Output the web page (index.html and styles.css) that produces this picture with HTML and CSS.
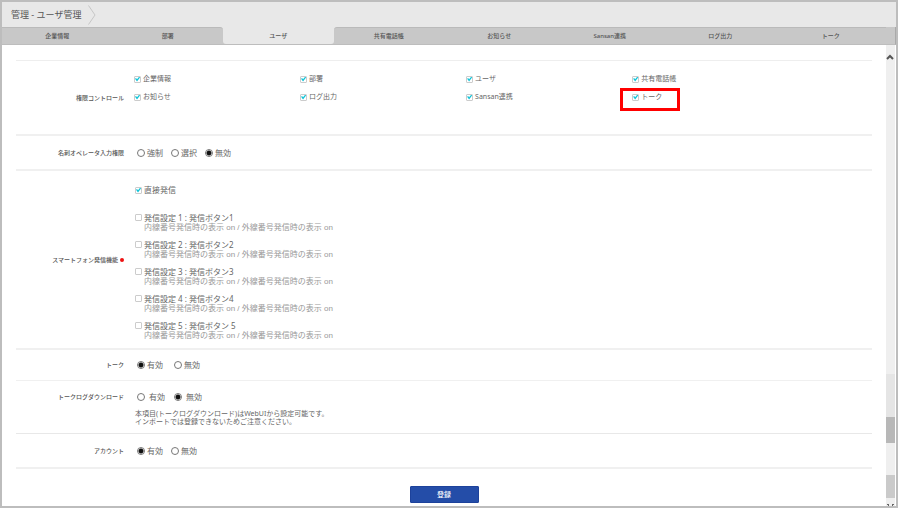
FILE: index.html
```html
<!DOCTYPE html>
<html lang="ja">
<head>
    <meta charset="UTF-8">
    <meta name="viewport" content="width=device-width, initial-scale=1.0">
    <title>管理 - ユーザ管理</title>
    <link rel="stylesheet" href="styles.css">
</head>
<body>
<div class="window">
    <header class="header">
        <h1>管理 - ユーザ管理</h1>
        <svg class="chevron" viewBox="0 0 8 20" fill="none" stroke="#c6c6c6"><path d="M.5 0.5L7 10L.5 19.5"/></svg>
    </header>

    <nav class="tabs">
        <a href="#">企業情報</a>
        <a href="#" class="before">部署</a>
        <a href="#" class="active"><span>ユーザ</span></a>
        <a href="#" class="after">共有電話帳</a>
        <a href="#">お知らせ</a>
        <a href="#">Sansan連携</a>
        <a href="#">ログ出力</a>
        <a href="#">トーク</a>
    </nav>

    <div class="content">
        <form class="form">
            <section class="row permissions">
                <h2>権限コントロール</h2>
                <div class="check-grid">
                    <label><input type="checkbox" checked>企業情報</label>
                    <label><input type="checkbox" checked>部署</label>
                    <label><input type="checkbox" checked>ユーザ</label>
                    <label><input type="checkbox" checked>共有電話帳</label>
                    <label><input type="checkbox" checked>お知らせ</label>
                    <label><input type="checkbox" checked>ログ出力</label>
                    <label><input type="checkbox" checked>Sansan連携</label>
                    <label class="marked"><input type="checkbox" checked>トーク</label>
                </div>
            </section>

            <section class="row">
                <h2>名刺オペレータ入力権限</h2>
                <div class="radios">
                    <label><input type="radio" name="operator">強制</label>
                    <label><input type="radio" name="operator">選択</label>
                    <label><input type="radio" name="operator" checked>無効</label>
                </div>
            </section>

            <section class="row calls">
                <h2>スマートフォン発信機能<span class="required"></span></h2>
                <div class="call-list">
                    <label class="direct"><input type="checkbox" checked>直接発信</label>
                    <div class="call">
                        <label><input type="checkbox">発信設定 1 : 発信ボタン1</label>
                        <p>内線番号発信時の表示 on / 外線番号発信時の表示 on</p>
                    </div>
                    <div class="call">
                        <label><input type="checkbox">発信設定 2 : 発信ボタン2</label>
                        <p>内線番号発信時の表示 on / 外線番号発信時の表示 on</p>
                    </div>
                    <div class="call">
                        <label><input type="checkbox">発信設定 3 : 発信ボタン3</label>
                        <p>内線番号発信時の表示 on / 外線番号発信時の表示 on</p>
                    </div>
                    <div class="call">
                        <label><input type="checkbox">発信設定 4 : 発信ボタン4</label>
                        <p>内線番号発信時の表示 on / 外線番号発信時の表示 on</p>
                    </div>
                    <div class="call">
                        <label><input type="checkbox">発信設定 5 : 発信ボタン 5</label>
                        <p>内線番号発信時の表示 on / 外線番号発信時の表示 on</p>
                    </div>
                </div>
            </section>

            <section class="row talk">
                <h2>トーク</h2>
                <div class="radios wide">
                    <label><input type="radio" name="talk" checked>有効</label>
                    <label><input type="radio" name="talk">無効</label>
                </div>
            </section>

            <section class="row talk-log">
                <h2>トークログダウンロード</h2>
                <div>
                    <div class="radios loose">
                        <label><input type="radio" name="talklog">有効</label>
                        <label><input type="radio" name="talklog" checked>無効</label>
                    </div>
                    <p class="note">本項目(トークログダウンロード)はWebUIから設定可能です。<br>インポートでは登録できないためご注意ください。</p>
                </div>
            </section>

            <section class="row">
                <h2>アカウント</h2>
                <div class="radios">
                    <label><input type="radio" name="account" checked>有効</label>
                    <label><input type="radio" name="account">無効</label>
                </div>
            </section>

            <button type="submit" class="submit">登録</button>
        </form>

        <div class="scrollbar">
            <div class="track-top">
                <svg viewBox="0 0 8 6" fill="none" stroke="#555" stroke-width="2"><path d="M1 5L4 2L7 5"/></svg>
            </div>
            <div class="shade"></div>
            <div class="thumb"></div>
            <div class="track-mid"></div>
            <div class="thumb-low"></div>
            <div class="track-end">
                <svg viewBox="0 0 8 2" fill="#666"><path d="M1 0h2v1H1zM2 1h1v1H2zM6 0h2v1H6zM6 1h1v1H6z"/></svg>
            </div>
        </div>
    </div>
</div>
</body>
</html>
```
FILE: styles.css
```css
* {
    box-sizing: border-box;
}
body {
    margin: 0;
    font-family: "Noto Sans", "Noto Sans CJK JP", sans-serif;
    font-size: 8px;
    line-height: 10px;
    color: #666;
    background: #fff;
}
h1, h2, p {
    margin: 0;
    font-weight: normal;
}
.window {
    display: flex;
    flex-direction: column;
    min-height: 100vh;
    border: 2px solid #bdbdbd;
}

/* Header and tabs */
.header {
    display: flex;
    align-items: center;
    gap: 7px;
    height: 25px;
    padding-left: 9px;
    background: #e8e8e8;
}
.header h1 {
    color: #555;
    font-size: 9px;
    line-height: 12px;
}
.chevron {
    width: 8px;
    height: 20px;
}
.tabs {
    display: flex;
    height: 18px;
    padding-right: 9px;
    background: linear-gradient(to right, #e8e8e8 50%, #c8c8c8 50%);
    border-bottom: 1px solid #bdbdbd;
    border-right: 1px solid #aaa;
}
.tabs a {
    flex: 1;
    background: #c8c8c8;
    border-top: 1px solid #bababa;
    color: #555;
    font-size: 6px;
    font-weight: 500;
    line-height: 16px;
    text-align: center;
    text-decoration: none;
}
.tabs .before {
    border-top-right-radius: 3px;
}
.tabs .after {
    border-top-left-radius: 3px;
}
.tabs .active {
    border-top: 0;
}
.tabs .active span {
    display: block;
    height: 100%;
    padding-top: 1px;
    background: #e8e8e8;
    border-radius: 0 0 3px 3px;
}

/* Form rows */
.content {
    display: flex;
    flex: 1;
}
.form {
    flex: 1;
    padding: 15px 14px 3px;
}
.row {
    display: grid;
    grid-template-columns: 108px 1fr;
    column-gap: 10px;
    align-items: center;
    min-height: 35px;
    border-bottom: 2px solid #f0f0f0;
}
.row h2 {
    color: #555;
    font-size: 6px;
    font-weight: 500;
    text-align: right;
}
.required {
    display: inline-block;
    width: 4px;
    height: 4px;
    margin-left: 2px;
    border-radius: 50%;
    background: #e11;
    vertical-align: middle;
}
label {
    display: flex;
    align-items: center;
    gap: 2px;
}
.permissions {
    border-top: 1px solid #eee;
}
.check-grid {
    display: grid;
    grid-template-columns: repeat(4, 1fr);
    row-gap: 8px;
    padding: 13px 10% 32px 0;
    font-size: 7px;
}
.marked {
    position: relative;
    justify-self: start;
}
.marked::after {
    content: "";
    position: absolute;
    inset: -4px -18px -9px -12px;
    border: 3px solid #f00;
}
.radios {
    display: flex;
    gap: 8px;
    padding-left: 3px;
}
.wide {
    gap: 11px;
}
.loose {
    gap: 9px;
}
.loose label {
    gap: 4px;
}
.call-list {
    padding: 14px 0 7px 1px;
}
.direct {
    margin-bottom: 17px;
}
.call + .call {
    margin-top: 6px;
}
.call label {
    line-height: 11px;
}
.call p {
    padding-left: 9px;
    color: #999;
    font-family: "Liberation Sans", "Noto Sans CJK JP", sans-serif;
}
.talk {
    min-height: 31px;
    border-bottom-width: 1px;
}
.talk-log {
    align-items: start;
    padding: 11px 0 7px;
    border-bottom-width: 1px;
    border-color: #e8e8e8;
}
.note {
    margin-top: 8px;
    padding-left: 1px;
    font-size: 7px;
    line-height: 8px;
}

/* Controls */
input {
    flex: none;
    appearance: none;
    margin: 0;
    background: #fff;
}
input[type="checkbox"] {
    width: 7px;
    height: 7px;
    border: 1px solid #ccc;
    border-radius: 1px;
}
input[type="checkbox"]:checked::before {
    content: "";
    display: block;
    width: 5px;
    height: 5px;
    background: #10c4d8;
    clip-path: polygon(0 45%, 20% 30%, 40% 55%, 85% 0, 100% 20%, 40% 100%);
}
input[type="radio"] {
    width: 8px;
    height: 8px;
    border: 1px solid #777;
    border-radius: 50%;
}
input[type="radio"]:checked {
    background: radial-gradient(circle, #111 2px, #fff 3px);
}
.submit {
    display: block;
    min-width: 69px;
    margin: 17px auto 0;
    padding: 3px 8px;
    border: 1px solid #1d429b;
    border-radius: 1px;
    background: #244da8;
    color: #fff;
    font: 500 7px/9px "Noto Sans CJK JP", sans-serif;
}

/* Scrollbar */
.scrollbar {
    display: flex;
    flex-direction: column;
    width: 9px;
    margin-right: 1px;
    background: #efefef;
}
.scrollbar svg {
    display: block;
    width: 8px;
}
.track-top {
    flex: 328;
    padding-top: 9px;
}
.shade {
    flex: 44;
    background: #e5e5e5;
}
.thumb {
    flex: 26;
    background: #b8b8b8;
}
.track-mid {
    flex: 33;
}
.thumb-low {
    flex: 24;
    background: #cacaca;
}
.track-end {
    display: flex;
    flex: 8;
    align-items: flex-end;
}
```
